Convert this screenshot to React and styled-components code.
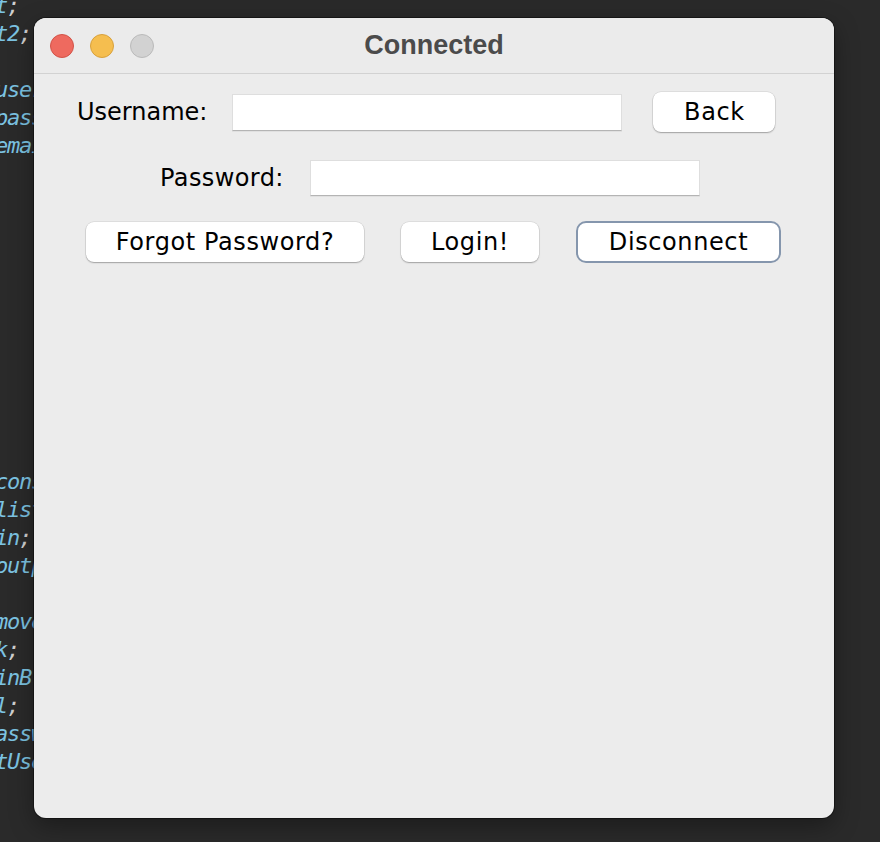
import React from 'react';
import styled, { createGlobalStyle } from 'styled-components';

const GlobalStyle = createGlobalStyle`
  html, body {
    margin: 0;
    padding: 0;
    background: #2a2a2a;
  }
`;

const Desktop = styled.div`
  display: flex;
  height: 842px;
  overflow: hidden;
  background: #2a2a2a;
`;

const Editor = styled.div`
  width: 34px;
  flex-shrink: 0;
  overflow: hidden;
  margin-top: -8px;
  font-family: 'DejaVu Sans Mono', monospace;
  font-style: italic;
  font-size: 22px;
  letter-spacing: -1.2px;
  line-height: 28px;
`;

const CodeLine = styled.div`
  white-space: pre;
  height: 28px;
  margin-left: -5px;
  color: #7cc3e2;
`;

const Punct = styled.span`
  color: #cfcfcf;
`;

const Window = styled.div`
  width: 800px;
  height: 800px;
  margin-top: 18px;
  flex-shrink: 0;
  display: flex;
  flex-direction: column;
  background: #ececec;
  border-radius: 12px;
  overflow: hidden;
  box-shadow: 0 0 0 1px rgba(0, 0, 0, 0.4), 0 8px 24px rgba(0, 0, 0, 0.35);
`;

const TitleBar = styled.div`
  height: 55px;
  flex-shrink: 0;
  display: grid;
  grid-template-columns: 1fr auto 1fr;
  align-items: center;
  padding: 0 16px;
  border-bottom: 1px solid #d2d2d2;
  background: #ebebeb;
`;

const Lights = styled.div`
  display: flex;
  gap: 16px;
`;

const Light = styled.span`
  width: 22px;
  height: 22px;
  border-radius: 50%;
  background: ${(p) => p.$fill};
  border: 1px solid ${(p) => p.$edge};
`;

const Title = styled.div`
  font-family: 'Liberation Sans', Arial, sans-serif;
  font-weight: 700;
  font-size: 27px;
  color: #4b4b4b;
`;

const Content = styled.div`
  display: flex;
  flex-direction: column;
  font-family: 'DejaVu Sans', 'Lucida Grande', sans-serif;
  font-size: 24px;
  color: #000;
`;

const Row = styled.div`
  display: flex;
  align-items: center;
  height: ${(p) => p.$height}px;
  margin-top: ${(p) => p.$top}px;
  padding-left: ${(p) => p.$left}px;
  gap: ${(p) => p.$gap}px;
`;

const Label = styled.span`
  white-space: nowrap;
  letter-spacing: ${(p) => p.$spacing || 0}px;
`;

const TextField = styled.div`
  width: ${(p) => p.$width}px;
  height: ${(p) => p.$height}px;
  box-sizing: border-box;
  background: #fff;
  border: 1px solid #dedede;
  border-bottom-color: #b4b4b4;
  box-shadow: 0 1px 0 rgba(0, 0, 0, 0.05);
`;

const Button = styled.button`
  width: ${(p) => p.$width}px;
  height: ${(p) => (p.$focused ? 42 : 40)}px;
  margin-left: ${(p) => p.$push || 0}px;
  box-sizing: border-box;
  padding: 0;
  background: #fff;
  border: ${(p) => (p.$focused ? '2px solid #8596ad' : 'none')};
  border-radius: ${(p) => (p.$focused ? 10 : 8)}px;
  box-shadow: ${(p) =>
    p.$focused
      ? 'none'
      : '0 0 0 0.5px rgba(0,0,0,0.12), 0 1px 1.5px rgba(0,0,0,0.28)'};
  font-family: 'DejaVu Sans', 'Lucida Grande', sans-serif;
  font-size: 24px;
  letter-spacing: 0.6px;
  color: #000;
  text-align: center;
`;

const code = [
  't;', 't2;', '', 'user', 'pass', 'emai', '', '', '', '', '', '', '', '', '', '', '',
  'cons', 'list', 'in;', 'outp', '', 'move', 'k;', 'inB', 'l;', 'assw', 'tUse', '', '', '', '',
];

function renderLine(text) {
  return text.split('').map((ch, i) =>
    ch === ';' ? <Punct key={i}>{ch}</Punct> : <React.Fragment key={i}>{ch}</React.Fragment>
  );
}

export default function App() {
  return (
    <>
      <GlobalStyle />
      <Desktop>
        <Editor>
          {code.map((line, i) => (
            <CodeLine key={i}>{renderLine(line)}</CodeLine>
          ))}
        </Editor>
        <Window>
          <TitleBar>
            <Lights>
              <Light $fill="#ee6a5f" $edge="#d25348" />
              <Light $fill="#f5be4f" $edge="#d8a13c" />
              <Light $fill="#d2d2d2" $edge="#bababa" />
            </Lights>
            <Title>Connected</Title>
            <span />
          </TitleBar>
          <Content>
            <Row $top={18} $height={40} $left={43} $gap={25}>
              <Label>Username:</Label>
              <TextField $width={390} $height={37} />
              <Button $width={122} $push={6}>Back</Button>
            </Row>
            <Row $top={28} $height={36} $left={126} $gap={26}>
              <Label $spacing={0.4}>Password:</Label>
              <TextField $width={390} $height={36} />
            </Row>
            <Row $top={25} $height={42} $left={52} $gap={37}>
              <Button $width={278}>Forgot Password?</Button>
              <Button $width={138}>Login!</Button>
              <Button $width={205} $focused>Disconnect</Button>
            </Row>
          </Content>
        </Window>
      </Desktop>
    </>
  );
}
